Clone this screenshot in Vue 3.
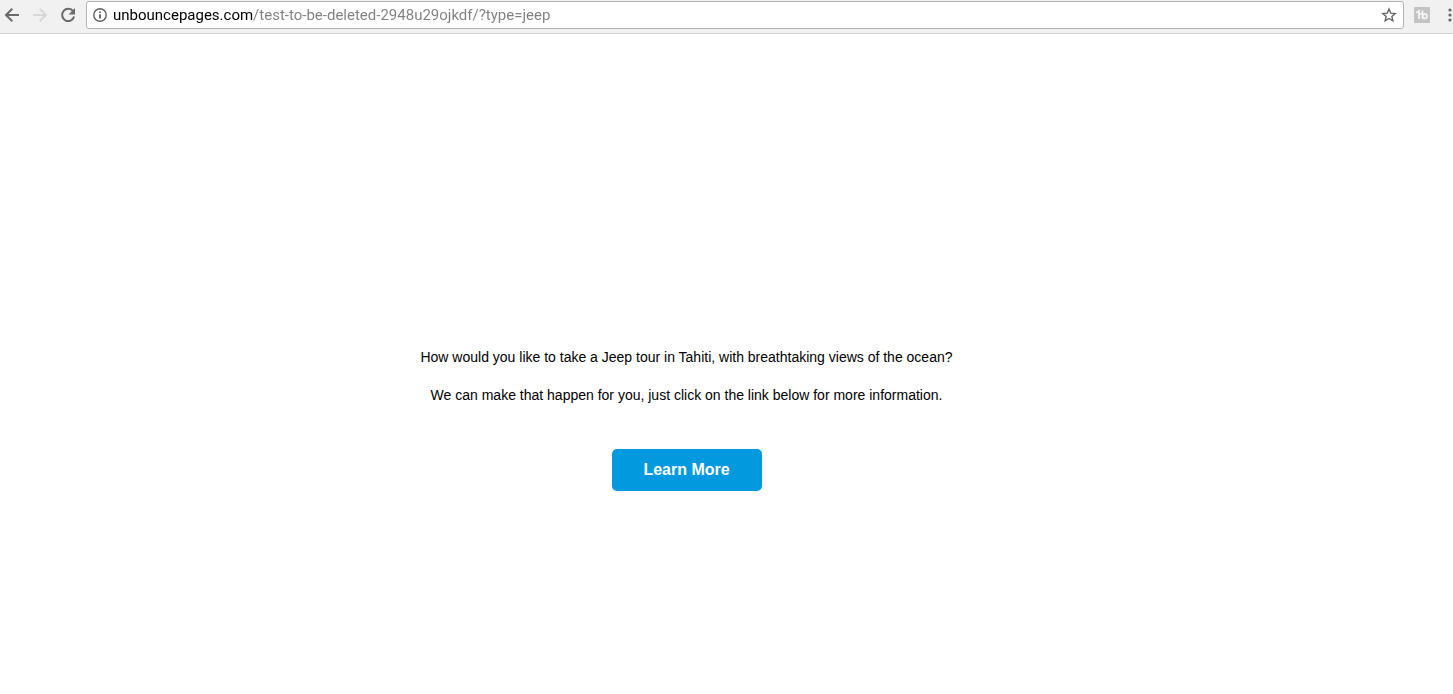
<script setup>
import { ref } from 'vue'

const address = ref('unbouncepages.com/test-to-be-deleted-2948u29ojkdf/?type=jeep')
</script>

<template>
  <div class="window">
    <header class="toolbar">
      <nav class="nav">
        <button type="button" class="icon-button" aria-label="Back">
          <svg width="16" height="16" viewBox="0 0 16 16" fill="none" stroke="#6a6a6a" stroke-width="2">
            <path d="M15 8H2.5M8.3 1.7 2 8l6.3 6.3" />
          </svg>
        </button>
        <button type="button" class="icon-button" aria-label="Forward">
          <svg width="16" height="16" viewBox="0 0 16 16" fill="none" stroke="#d8d8d8" stroke-width="2">
            <path d="M1 8h12.5M7.7 1.7 14 8l-6.3 6.3" />
          </svg>
        </button>
        <button type="button" class="icon-button" aria-label="Reload">
          <svg width="16" height="16" viewBox="0 0 16 16">
            <path d="M13.2 4.4A6.1 6.1 0 1 0 14.1 9.6" fill="none" stroke="#6a6a6a" stroke-width="2" />
            <path d="M15 1v6.4H8.6z" fill="#6a6a6a" />
          </svg>
        </button>
      </nav>

      <div class="omnibox">
        <button type="button" class="icon-button info" aria-label="View site information">
          <svg width="14" height="14" viewBox="0 0 14 14">
            <circle cx="7" cy="7" r="6.2" fill="none" stroke="#5f5f5f" stroke-width="1.4" />
            <path d="M6.1 6.2h1.8v4.3H6.1zM6.1 3.4h1.8v1.7H6.1z" fill="#5f5f5f" />
          </svg>
        </button>
        <input v-model="address" class="address" type="text" aria-label="Address" spellcheck="false" />
        <button type="button" class="icon-button" aria-label="Bookmark this page">
          <svg width="16" height="16" viewBox="0 0 16 16" fill="none" stroke="#666" stroke-width="1.4">
            <path d="M8 2l1.75 4.1 4.45.4-3.35 2.95 1 4.35L8 11.5l-3.85 2.3 1-4.35L1.8 6.5l4.45-.4z" />
          </svg>
        </button>
      </div>

      <button type="button" class="icon-button extension" aria-label="Extension">
        <svg width="16" height="16" viewBox="0 0 16 16">
          <path d="M0 0h16v16H0z" fill="#c3c3c3" />
          <path d="M2.2 5.7 5 4v8M5 6.8h3M8.5 3.5v8" fill="none" stroke="#f4f4f4" stroke-width="1.8" />
          <circle cx="10.7" cy="9.2" r="2.2" fill="none" stroke="#f4f4f4" stroke-width="1.8" />
        </svg>
      </button>
      <button type="button" class="icon-button menu" aria-label="Menu">
        <svg width="6" height="14" viewBox="0 0 6 14" fill="#666">
          <circle cx="3" cy="2" r="1.6" />
          <circle cx="3" cy="7" r="1.6" />
          <circle cx="3" cy="12" r="1.6" />
        </svg>
      </button>
    </header>

    <main class="page">
      <p>How would you like to take a Jeep tour in Tahiti, with breathtaking views of the ocean?</p>
      <p>We can make that happen for you, just click on the link below for more information.</p>
      <a class="cta" href="#">Learn More</a>
    </main>
  </div>
</template>

<style>
body {
  margin: 0;
  background: #fff;
}
</style>

<style scoped>
.window {
  overflow: hidden;
  font-family: "Liberation Sans", Arial, sans-serif;
  color: #000;
}

.toolbar {
  box-sizing: border-box;
  display: flex;
  align-items: flex-start;
  height: 34px;
  padding: 1px 0 0 4px;
  border-bottom: 1px solid #d0d0d0;
  background: #f1f1f1;
}

.nav {
  display: flex;
  gap: 12px;
  align-items: center;
  height: 28px;
  margin-right: 10px;
}

.icon-button {
  display: flex;
  flex: none;
  padding: 0;
  border: 0;
  background: none;
}

.omnibox {
  box-sizing: border-box;
  display: flex;
  flex: 1;
  align-items: center;
  min-width: 0;
  height: 28px;
  padding: 0 6px;
  border: 1px solid #b3b3b3;
  border-radius: 3px;
  background: #fff;
}

.info {
  margin-right: 6px;
}

.address {
  flex: 1;
  min-width: 0;
  height: 26px;
  padding: 0;
  border: 0;
  outline: 0;
  background: linear-gradient(to right, #000 140px, #808080 140px);
  background-clip: text;
  -webkit-background-clip: text;
  -webkit-text-fill-color: transparent;
  font: 15px/26px Roboto, sans-serif;
}

.extension {
  margin: 6px 17px 0 10px;
}

.menu {
  margin: 7px 0 0;
}

.page {
  display: flex;
  flex-direction: column;
  align-items: center;
  padding: 312px 80px 0 0;
  font-size: 14px;
  line-height: 22px;
}

.page p {
  margin: 0 0 16px;
}

.cta {
  box-sizing: border-box;
  min-width: 150px;
  margin-top: 27px;
  padding: 0 24px;
  border-radius: 5px;
  background: #0399de;
  color: #fff;
  font-size: 16px;
  font-weight: bold;
  line-height: 42px;
  text-align: center;
  text-decoration: none;
}
</style>
